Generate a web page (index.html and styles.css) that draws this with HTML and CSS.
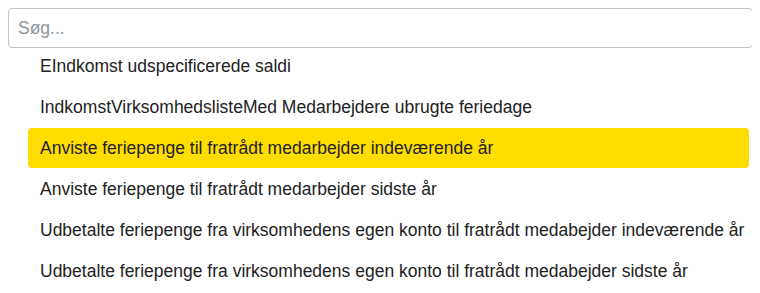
FILE: index.html
```html
<!DOCTYPE html>
<html lang="da">
<head>
    <meta charset="UTF-8">
    <meta name="viewport" content="width=device-width, initial-scale=1.0">
    <title>Søg rapporter</title>
    <link rel="stylesheet" href="styles.css">
</head>
<body>

    <div class="search">
        <input type="text" class="search-input" placeholder="Søg...">

        <ul class="results">
            <li class="result-item">EIndkomst udspecificerede saldi</li>
            <li class="result-item">IndkomstVirksomhedslisteMed Medarbejdere ubrugte feriedage</li>
            <li class="result-item active">Anviste feriepenge til fratrådt medarbejder indeværende år</li>
            <li class="result-item">Anviste feriepenge til fratrådt medarbejder sidste år</li>
            <li class="result-item">Udbetalte feriepenge fra virksomhedens egen konto til fratrådt medabejder indeværende år</li>
            <li class="result-item">Udbetalte feriepenge fra virksomhedens egen konto til fratrådt medabejder sidste år</li>
        </ul>
    </div>

</body>
</html>
```

FILE: styles.css
```css
* {
    margin: 0;
    padding: 0;
    box-sizing: border-box;
}

body {
    margin: 8px;
    background-color: #fff;
    font-family: "Liberation Sans", Arial, sans-serif;
    color: #222;
}

.search {
    width: 745px;
}

.search-input {
    display: block;
    width: 100%;
    height: 40px;
    padding: 0 9px;
    border: 1px solid #c4c4c4;
    border-radius: 4px;
    font-family: inherit;
    font-size: 17.5px;
    color: #222;
    outline: none;
}

.search-input::placeholder {
    color: #8e949c;
}

.results {
    list-style: none;
    margin-top: -2px;
    margin-left: 20px;
    width: 721px;
}

.result-item {
    padding: 10px 12px;
    line-height: 20px;
    font-size: 17.5px;
    border-radius: 4px;
    white-space: nowrap;
    margin-bottom: 1px;
}

.result-item.active {
    background-color: #ffdd00;
}
```
